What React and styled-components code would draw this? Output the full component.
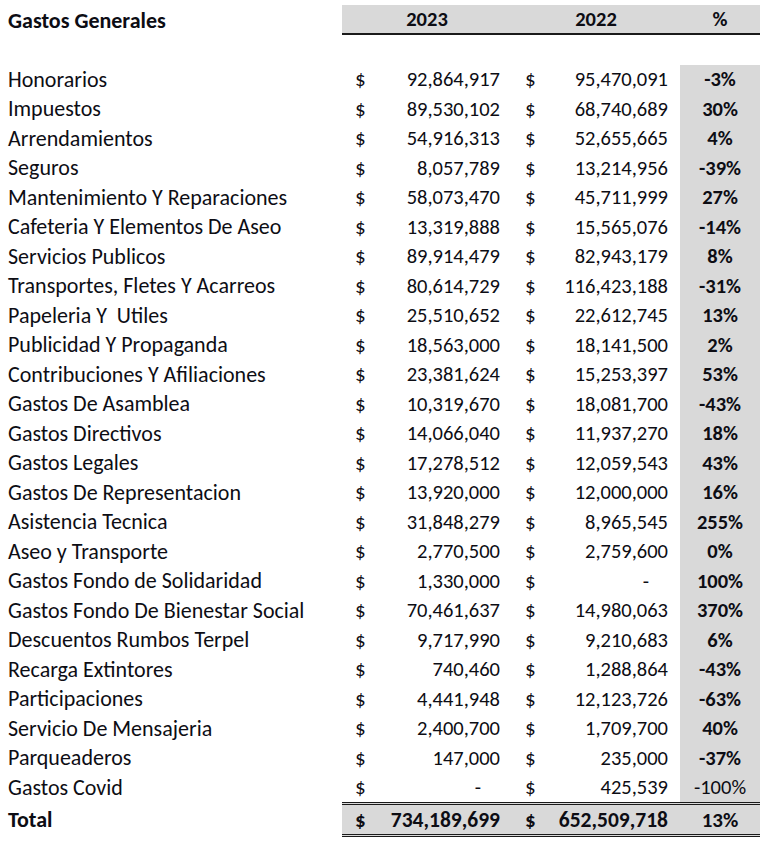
import React from "react";
import styled, { createGlobalStyle } from "styled-components";

const Global = createGlobalStyle`
  html, body { margin: 0; padding: 0; background: #fff; }
  body { font-family: Carlito, Calibri, Lato, "Liberation Sans", sans-serif; color: #0d0d14; }
`;

const Sheet = styled.div`
  display: grid;
  grid-template-columns: 342px 170px 168px 80px;
  padding-top: 5px;
  width: 760px;
  font-size: 20.5px;
`;

const Cell = styled.div`
  height: ${(p) => p.$h || 29.5}px;
  display: flex;
  align-items: center;
  box-sizing: border-box;
  white-space: pre;
`;

const Label = styled(Cell)`
  padding-left: 8px;
  font-size: 22px;
  font-weight: ${(p) => (p.$bold ? 700 : 400)};
`;

const HeadCell = styled(Cell)`
  background: #d9d9d9;
  border-bottom: 2px solid #1a1a1a;
  justify-content: center;
  font-weight: 700;
  height: 30px;
`;

const Money = styled(Cell)`
  justify-content: space-between;
  padding: 0 12px 0 13px;
  font-weight: ${(p) => (p.$total ? 700 : 400)};
  ${(p) =>
    p.$total &&
    `background:#d9d9d9;border-top:3px double #1a1a1a;border-bottom:3px double #1a1a1a;height:35px;font-size:21.5px;`}
`;

const Dollar = styled.span`
  font-size: 21px;
`;

const Dash = styled.span`
  padding-right: 19px;
`;

const Pct = styled(Cell)`
  justify-content: center;
  background: #d9d9d9;
  font-weight: ${(p) => (p.$regular ? 400 : 700)};
  ${(p) =>
    p.$total &&
    `border-top:3px double #1a1a1a;border-bottom:3px double #1a1a1a;height:35px;font-size:21px;`}
`;

const Blank = styled(Cell)``;

const rows = [
  ["Honorarios", "92,864,917", "95,470,091", "-3%"],
  ["Impuestos", "89,530,102", "68,740,689", "30%"],
  ["Arrendamientos", "54,916,313", "52,655,665", "4%"],
  ["Seguros", "8,057,789", "13,214,956", "-39%"],
  ["Mantenimiento Y Reparaciones", "58,073,470", "45,711,999", "27%"],
  ["Cafeteria Y Elementos De Aseo", "13,319,888", "15,565,076", "-14%"],
  ["Servicios Publicos", "89,914,479", "82,943,179", "8%"],
  ["Transportes, Fletes Y Acarreos", "80,614,729", "116,423,188", "-31%"],
  ["Papeleria Y  Utiles", "25,510,652", "22,612,745", "13%"],
  ["Publicidad Y Propaganda", "18,563,000", "18,141,500", "2%"],
  ["Contribuciones Y Afiliaciones", "23,381,624", "15,253,397", "53%"],
  ["Gastos De Asamblea", "10,319,670", "18,081,700", "-43%"],
  ["Gastos Directivos", "14,066,040", "11,937,270", "18%"],
  ["Gastos Legales", "17,278,512", "12,059,543", "43%"],
  ["Gastos De Representacion", "13,920,000", "12,000,000", "16%"],
  ["Asistencia Tecnica", "31,848,279", "8,965,545", "255%"],
  ["Aseo y Transporte", "2,770,500", "2,759,600", "0%"],
  ["Gastos Fondo de Solidaridad", "1,330,000", "-", "100%"],
  ["Gastos Fondo De Bienestar Social", "70,461,637", "14,980,063", "370%"],
  ["Descuentos Rumbos Terpel", "9,717,990", "9,210,683", "6%"],
  ["Recarga Extintores", "740,460", "1,288,864", "-43%"],
  ["Participaciones", "4,441,948", "12,123,726", "-63%"],
  ["Servicio De Mensajeria", "2,400,700", "1,709,700", "40%"],
  ["Parqueaderos", "147,000", "235,000", "-37%"],
  ["Gastos Covid", "-", "425,539", "-100%"],
];

const Amount = ({ v, total }) => (
  <Money $total={total}>
    <Dollar>$</Dollar>
    {v === "-" ? <Dash>-</Dash> : <span>{v}</span>}
  </Money>
);

export default function App() {
  return (
    <>
      <Global />
      <Sheet>
        <Label $bold $h={30}>Gastos Generales</Label>
        <HeadCell>2023</HeadCell>
        <HeadCell>2022</HeadCell>
        <HeadCell>%</HeadCell>

        <Blank /><Blank /><Blank /><Blank />

        {rows.map(([name, a, b, p]) => (
          <React.Fragment key={name}>
            <Label>{name}</Label>
            <Amount v={a} />
            <Amount v={b} />
            <Pct $regular={p === "-100%"}>{p}</Pct>
          </React.Fragment>
        ))}

        <Label $bold $h={35}>Total</Label>
        <Amount v="734,189,699" total />
        <Amount v="652,509,718" total />
        <Pct $total>13%</Pct>
      </Sheet>
    </>
  );
}
